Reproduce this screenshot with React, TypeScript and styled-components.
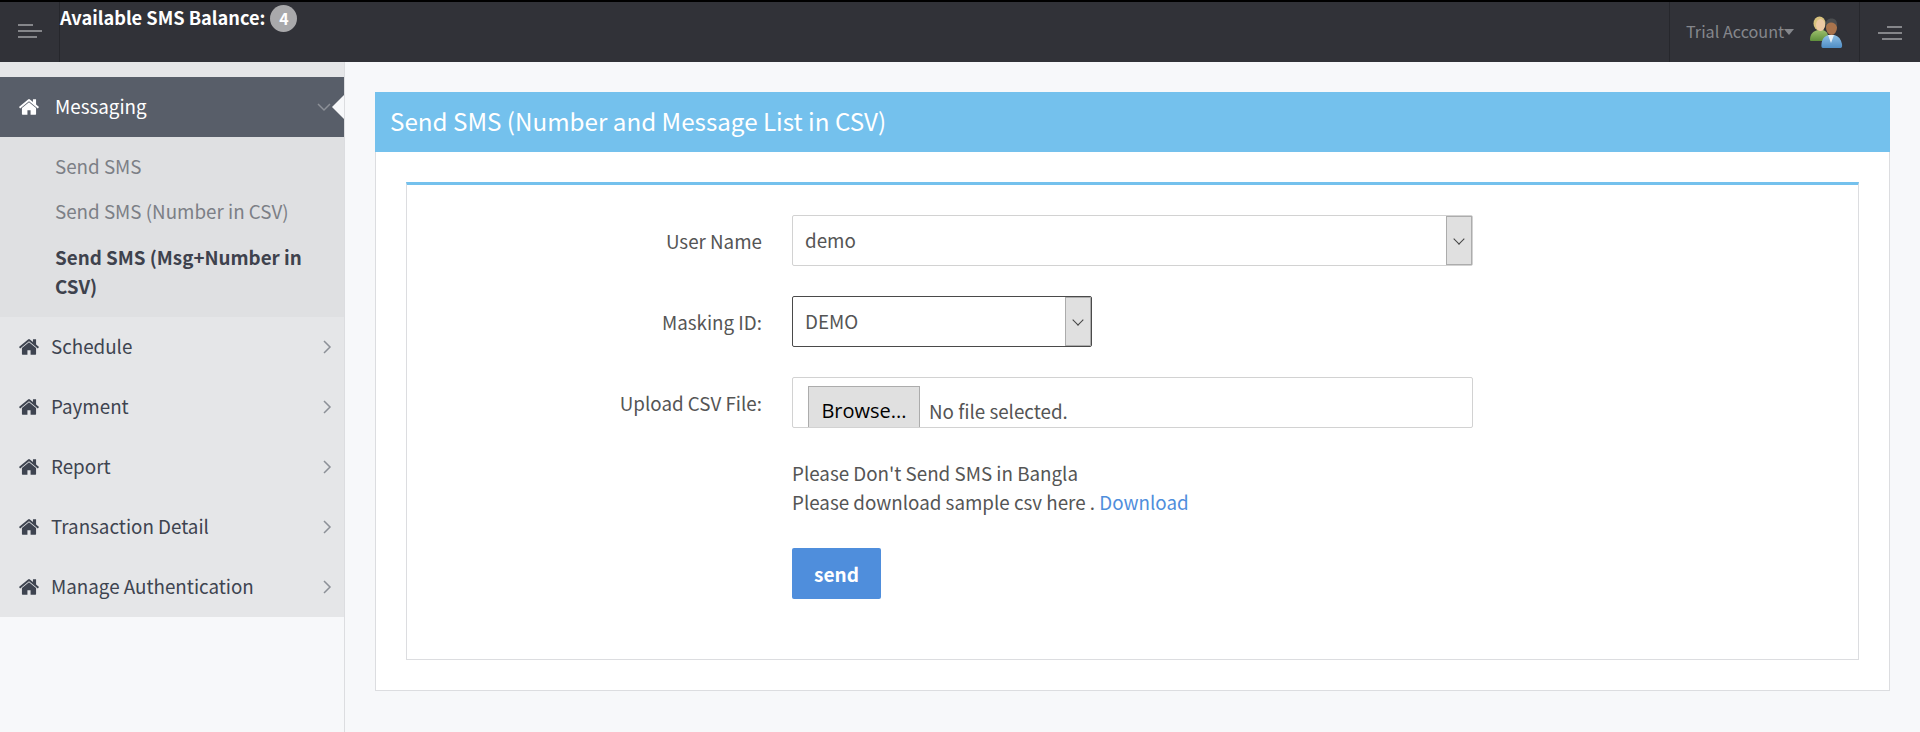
import React from "react";
import styled, { createGlobalStyle } from "styled-components";

const GlobalStyle = createGlobalStyle`
  html, body {
    margin: 0;
    padding: 0;
    height: 100%;
    background: #f7f8fa;
    font-family: "Noto Sans CJK SC", "Source Sans Pro", "Noto Sans", sans-serif;
    font-size: 18px;
    color: #555;
  }
  * { box-sizing: border-box; }
`;

const HomeIcon: React.FC = () => (
  <svg width="22" height="22" viewBox="0 0 1792 1792" fill="currentColor">
    <path d="M1472 992v480q0 26-19 45t-45 19h-384v-384h-256v384h-384q-26 0-45-19t-19-45v-480q0-1 .5-3t.5-3l575-474 575 474q1 2 1 6zm223-69l-62 74q-8 9-21 11h-3q-13 0-21-7l-692-577-692 577q-12 8-24 7-13-2-21-11l-62-74q-8-10-7-23.500t11-21.500l719-599q32-26 76-26t76 26l244 204v-195q0-14 9-23t23-9h192q14 0 23 9t9 23v408l219 182q10 8 11 21.500t-7 23.500z" />
  </svg>
);

const Chevron: React.FC<{ open?: boolean }> = ({ open }) => (
  <svg width="14" height="14" viewBox="0 0 14 14" fill="none" stroke="#8c9097" strokeWidth="1.5">
    <path d={open ? "M1 4l6 6 6-6" : "M4 1l6 6-6 6"} />
  </svg>
);

const BarsIcon: React.FC<{ right?: boolean }> = ({ right }) => (
  <svg width="24" height="14" viewBox="0 0 24 14" stroke="#85868a" strokeWidth="2">
    {right ? (
      <>
        <path d="M9 1h15" />
        <path d="M0 7h24" />
        <path d="M4 13h20" />
      </>
    ) : (
      <>
        <path d="M0 1h15" />
        <path d="M0 7h24" />
        <path d="M0 13h19" />
      </>
    )}
  </svg>
);

const UsersIcon: React.FC = () => (
  <svg width="34" height="32" viewBox="0 0 34 32">
    <defs>
      <linearGradient id="womanBody" x1="0" y1="0" x2="0" y2="1">
        <stop offset="0" stopColor="#9cc06c" />
        <stop offset="1" stopColor="#5f8f3c" />
      </linearGradient>
      <linearGradient id="manBody" x1="0" y1="0" x2="0" y2="1">
        <stop offset="0" stopColor="#8fc0e6" />
        <stop offset="1" stopColor="#4f8dc4" />
      </linearGradient>
    </defs>
    <path d="M1 24c0-6 3-9 8-10h5c3 1 5 3 5 6v5H3c-1 0-2 0-2-1z" fill="url(#womanBody)" />
    <ellipse cx="10.500" cy="7.500" rx="6" ry="7" fill="#d8c27e" />
    <ellipse cx="11.500" cy="9" rx="4.500" ry="6" fill="#edc9a4" />
    <path d="M14 32c-1 0-2-1-1.500-4 .5-5 3-8 7-9h6c4 1 6.500 4 7.500 9 .5 3-.5 4-1.500 4z" fill="url(#manBody)" />
    <path d="M19 19l3 8 3-8z" fill="#e8f0f6" />
    <ellipse cx="22.500" cy="11.500" rx="5.500" ry="7.500" fill="#a9734c" />
    <path d="M16.500 11c-.5-6 2.500-8.500 6-8.500s6.500 2.500 5.500 8.500c-1-3-3-4.500-6-4.500-2.500 0-4.500 1.500-5.500 4.500z" fill="#4b4d4f" />
  </svg>
);

const menuItems = ["Schedule", "Payment", "Report", "Transaction Detail", "Manage Authentication"];

export default function App() {
  return (
    <Page>
      <GlobalStyle />
      <Header>
        <ToggleCell>
          <BarsIcon />
        </ToggleCell>
        <Balance>
          Available SMS Balance:
          <Badge>4</Badge>
        </Balance>
        <AccountCell>
          <AccountName>Trial Account</AccountName>
          <Caret />
          <UsersIcon />
        </AccountCell>
        <RightToggle>
          <BarsIcon right />
        </RightToggle>
      </Header>
      <Body>
        <Sidebar>
          <Menu>
            <ActiveItem>
              <ActiveIcon>
                <HomeIcon />
              </ActiveIcon>
              <ActiveLabel>Messaging</ActiveLabel>
              <Chevron open />
            </ActiveItem>
            <SubMenu>
              <SubItem>Send SMS</SubItem>
              <SubItem>Send SMS (Number in CSV)</SubItem>
              <SubItem $current>Send SMS (Msg+Number in CSV)</SubItem>
            </SubMenu>
            {menuItems.map((label) => (
              <MenuItem key={label}>
                <ItemIcon>
                  <HomeIcon />
                </ItemIcon>
                <ItemLabel>{label}</ItemLabel>
                <Chevron />
              </MenuItem>
            ))}
          </Menu>
        </Sidebar>
        <Main>
          <Panel>
            <PanelTitle>Send SMS (Number and Message List in CSV)</PanelTitle>
            <PanelBody>
              <FormBox>
                <FormRow>
                  <FieldLabel>User Name</FieldLabel>
                  <SelectBox $width={681}>
                    <SelectValue>demo</SelectValue>
                    <SelectArrow>
                      <ArrowGlyph />
                    </SelectArrow>
                  </SelectBox>
                </FormRow>
                <FormRow>
                  <FieldLabel>Masking ID:</FieldLabel>
                  <SelectBox $width={300} $focused>
                    <SelectValue>DEMO</SelectValue>
                    <SelectArrow>
                      <ArrowGlyph />
                    </SelectArrow>
                  </SelectBox>
                </FormRow>
                <FormRow>
                  <FieldLabel>Upload CSV File:</FieldLabel>
                  <FileBox>
                    <BrowseButton>Browse...</BrowseButton>
                    <FileText>No file selected.</FileText>
                  </FileBox>
                </FormRow>
                <HelpText>
                  Please Don't Send SMS in Bangla
                  <br />
                  Please download sample csv here . <HelpLink href="#">Download</HelpLink>
                </HelpText>
                <SendButton>send</SendButton>
              </FormBox>
            </PanelBody>
          </Panel>
        </Main>
      </Body>
    </Page>
  );
}

const Page = styled.div`
  height: 732px;
  display: flex;
  flex-direction: column;
  overflow: hidden;
`;

const Header = styled.header`
  height: 62px;
  flex: none;
  display: flex;
  background: #313238;
  border-top: 2px solid #000;
`;

const ToggleCell = styled.div`
  width: 60px;
  flex: none;
  display: flex;
  align-items: center;
  padding: 0 0 2px 18px;
  border-right: 1px solid #26272c;
`;

const Balance = styled.div`
  flex: 1;
  display: flex;
  align-items: flex-start;
  padding-top: 1px;
  color: #fff;
  font-weight: 700;
  font-size: 18.200px;
  line-height: 28px;
`;

const Badge = styled.span`
  width: 27px;
  height: 27px;
  margin-left: 5px;
  margin-top: 2px;
  border-radius: 50%;
  background: #a9a9ab;
  color: #fff;
  font-size: 16px;
  line-height: 27px;
  text-align: center;
`;

const AccountCell = styled.div`
  width: 191px;
  flex: none;
  display: flex;
  align-items: center;
  padding: 0 0 0 16px;
  border-left: 1px solid #26272c;
  border-right: 1px solid #26272c;
`;

const AccountName = styled.span`
  color: #85878c;
  font-size: 16.200px;
  padding-bottom: 2px;
`;

const Caret = styled.span`
  width: 0;
  height: 0;
  margin: 0 15px 1px 0;
  border-left: 5.500px solid transparent;
  border-right: 5.500px solid transparent;
  border-top: 6px solid #85878c;
`;

const RightToggle = styled.div`
  width: 60px;
  flex: none;
  display: flex;
  align-items: center;
  justify-content: flex-end;
  padding: 2px 18px 0 0;
`;

const Body = styled.div`
  flex: 1;
  display: flex;
  min-height: 0;
`;

const Sidebar = styled.aside`
  width: 345px;
  flex: none;
  border-right: 1px solid #dcdde0;
`;

const Menu = styled.nav`
  background: #e5e6e8;
  padding-top: 15px;
`;

const ActiveItem = styled.div`
  position: relative;
  height: 60px;
  display: flex;
  align-items: center;
  padding: 0 13px 0 18px;
  background: #585e69;
  color: #fff;

  &::after {
    content: "";
    position: absolute;
    right: 0;
    top: 18px;
    border-top: 12px solid transparent;
    border-bottom: 12px solid transparent;
    border-right: 12px solid #f7f8fa;
  }
`;

const ActiveIcon = styled.span`
  display: flex;
  width: 37px;
  color: #fff;
`;

const ActiveLabel = styled.span`
  flex: 1;
  font-size: 18.800px;
  padding-bottom: 3px;
`;

const SubMenu = styled.div`
  background: #dfe0e2;
  padding: 6px 30px 9px 55px;
`;

const SubItem = styled.div<{ $current?: boolean }>`
  padding: ${({ $current }) => ($current ? "9px 0 8px" : "8px 0")};
  line-height: 29px;
  font-size: 18.800px;
  color: ${({ $current }) => ($current ? "#3e424d" : "#7c7f86")};
  font-weight: ${({ $current }) => ($current ? 700 : 400)};
`;

const MenuItem = styled.div`
  height: 60px;
  display: flex;
  align-items: center;
  padding: 0 10px 0 18px;
  color: #3e4450;
`;

const ItemIcon = styled.span`
  display: flex;
  width: 33px;
`;

const ItemLabel = styled.span`
  flex: 1;
  font-size: 18.800px;
  padding-bottom: 3px;
`;

const Main = styled.main`
  flex: 1;
  padding: 30px 30px 0;
`;

const Panel = styled.section`
  background: #fff;
  border-radius: 2px;
`;

const PanelTitle = styled.h2`
  height: 60px;
  margin: 0;
  padding: 0 15px;
  background: #74c1ed;
  color: #fff;
  font-size: 24.200px;
  font-weight: 400;
  line-height: 58px;
`;

const PanelBody = styled.div`
  padding: 30px 30px 30px;
  border: 1px solid #dcdde0;
  border-top: none;
`;

const FormBox = styled.div`
  height: 478px;
  padding-top: 30px;
  background: #fff;
  border: 1px solid #dcdde0;
  border-top: 3px solid #74c1ed;
`;

const FormRow = styled.div`
  display: flex;
  align-items: center;
  margin-bottom: 30px;
`;

const FieldLabel = styled.label`
  width: 355px;
  text-align: right;
  font-size: 18.800px;
  margin-right: 30px;
  color: #555;
`;

const SelectBox = styled.div<{ $width: number; $focused?: boolean }>`
  width: ${({ $width }) => $width}px;
  height: 51px;
  display: flex;
  align-items: stretch;
  border: 1px solid ${({ $focused }) => ($focused ? "#4a4a4a" : "#d2d2d2")};
  border-radius: 2px;
  background: #fff;
`;

const SelectValue = styled.span`
  flex: 1;
  padding: 0 12px;
  font-size: 18.800px;
  line-height: 47px;
  color: #555;
`;

const SelectArrow = styled.span`
  width: 26px;
  display: flex;
  align-items: center;
  justify-content: center;
  background: #e0e0e0;
  border: 1px solid #acacac;
`;

const ArrowGlyph = styled.span`
  width: 8px;
  height: 8px;
  margin-bottom: 4px;
  border-right: 1px solid #444;
  border-bottom: 1px solid #444;
  transform: rotate(45deg);
`;

const FileBox = styled.div`
  width: 681px;
  height: 51px;
  display: flex;
  align-items: flex-start;
  padding: 8px 0 0 15px;
  overflow: hidden;
  border: 1px solid #d2d2d2;
  border-radius: 2px;
`;

const BrowseButton = styled.span`
  width: 112px;
  height: 50px;
  flex: none;
  background: #e0e0e0;
  border: 1px solid #acacac;
  color: #000;
  font-family: "Open Sans", sans-serif;
  font-size: 20px;
  line-height: 48px;
  text-align: center;
`;

const FileText = styled.span`
  margin-left: 9px;
  font-size: 18.800px;
  line-height: 49px;
  color: #555;
`;

const HelpText = styled.p`
  margin: 0 0 0 385px;
  font-size: 18.800px;
  line-height: 29px;
  color: #555;
`;

const HelpLink = styled.a`
  color: #4f8edc;
  text-decoration: none;
`;

const SendButton = styled.button`
  display: block;
  width: 89px;
  height: 51px;
  margin: 32px 0 0 385px;
  padding: 0;
  border: none;
  border-radius: 2px;
  background: #4f8edc;
  color: #fff;
  font-family: inherit;
  font-size: 19px;
  font-weight: 700;
`;
